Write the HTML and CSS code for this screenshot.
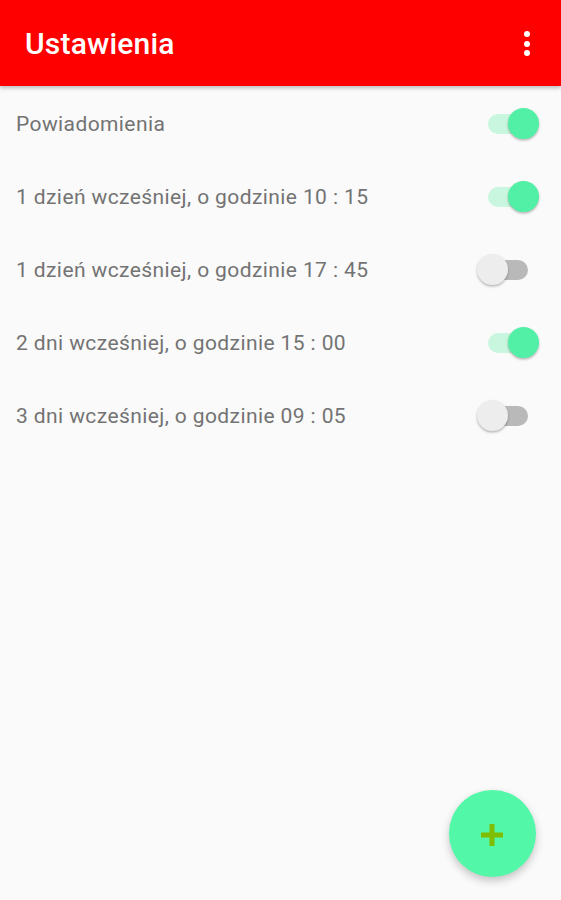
FILE: index.html
```html
<!DOCTYPE html>
<html lang="pl">
<head>
<meta charset="utf-8">
<title>Ustawienia</title>
<link rel="stylesheet" href="styles.css">
</head>
<body>
<header class="appbar">
  <h1 class="title">Ustawienia</h1>
  <div class="menu" aria-label="menu">
    <span class="dot"></span><span class="dot"></span><span class="dot"></span>
  </div>
</header>
<main class="list">
  <div class="row"><span class="label">Powiadomienia</span><span class="switch on"><span class="thumb"></span></span></div>
  <div class="row"><span class="label">1 dzień wcześniej, o godzinie 10 : 15</span><span class="switch on"><span class="thumb"></span></span></div>
  <div class="row"><span class="label">1 dzień wcześniej, o godzinie 17 : 45</span><span class="switch"><span class="thumb"></span></span></div>
  <div class="row"><span class="label">2 dni wcześniej, o godzinie 15 : 00</span><span class="switch on"><span class="thumb"></span></span></div>
  <div class="row"><span class="label">3 dni wcześniej, o godzinie 09 : 05</span><span class="switch"><span class="thumb"></span></span></div>
</main>
<button class="fab" aria-label="dodaj">
  <svg width="22" height="22" viewBox="0 0 22 22"><rect x="0" y="8.5" width="22" height="5" fill="#80bd00"/><rect x="8.5" y="0" width="5" height="22" fill="#80bd00"/></svg>
</button>
</body>
</html>
```
FILE: styles.css
```css
html, body {
  margin: 0;
  padding: 0;
  height: 100%;
}
body {
  background: #fafafa;
  font-family: Roboto, "Noto Sans", sans-serif;
  width: 561px;
  height: 900px;
  overflow: hidden;
  position: relative;
}
.appbar {
  height: 86px;
  background: #ff0000;
  display: flex;
  align-items: center;
  justify-content: space-between;
  padding: 0 31px 0 25px;
  box-sizing: border-box;
  box-shadow: 0 2px 4px rgba(0,0,0,0.25);
  position: relative;
  z-index: 1;
}
.title {
  margin: 0;
  color: #fff;
  font-size: 30px;
  font-weight: 500;
  letter-spacing: 0.2px;
  padding-top: 1px;
}
.menu {
  display: flex;
  flex-direction: column;
  gap: 3.5px;
  margin-top: 1px;
}
.dot {
  width: 6px;
  height: 6px;
  border-radius: 50%;
  background: #fff;
}
.list {
  padding-top: 1px;
}
.row {
  height: 73px;
  display: flex;
  align-items: center;
  justify-content: space-between;
  padding: 0 21px 0 16px;
}
.label {
  color: #737373;
  font-size: 21px;
  letter-spacing: 0.4px;
}
.switch {
  position: relative;
  width: 40px;
  height: 20px;
  border-radius: 10px;
  background: #b9b9b9;
  margin-right: 12px;
}
.switch.on {
  background: #c9f6de;
}
.thumb {
  position: absolute;
  top: -5.5px;
  left: -11px;
  width: 31px;
  height: 31px;
  border-radius: 50%;
  background: #ededed;
  box-shadow: 0 1.5px 2.5px rgba(0,0,0,0.28);
}
.switch.on .thumb {
  left: 20px;
  background: #52f0a6;
}
.fab {
  position: absolute;
  left: 449px;
  top: 790px;
  width: 87px;
  height: 87px;
  border-radius: 50%;
  border: none;
  background: #52f7a8;
  box-shadow: 0 4px 8px rgba(0,0,0,0.22);
  display: flex;
  align-items: center;
  justify-content: center;
  padding: 0;
  padding-top: 2px;
  padding-right: 2px;
}
```
